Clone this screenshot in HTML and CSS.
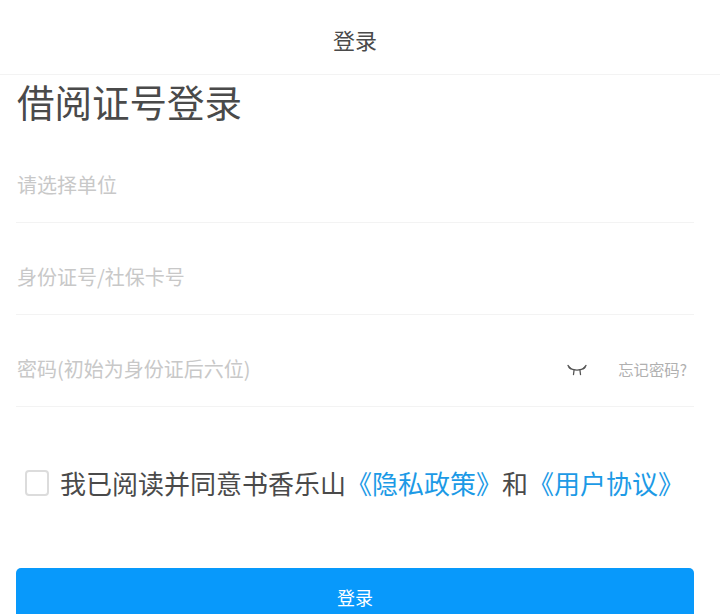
FILE: index.html
```html
<!DOCTYPE html>
<html lang="zh">
<head>
<meta charset="utf-8">
<title>登录</title>
<link rel="stylesheet" href="styles.css">
</head>
<body>
<header class="topbar">登录</header>
<main class="page">
  <h1 class="title">借阅证号登录</h1>
  <div class="field"><span class="placeholder">请选择单位</span></div>
  <div class="field"><span class="placeholder">身份证号/社保卡号</span></div>
  <div class="field">
    <span class="placeholder">密码(初始为身份证后六位)</span>
    <svg class="eye" width="20" height="14" viewBox="0 0 20 14" fill="none" stroke="#555" stroke-width="1.3" stroke-linecap="round">
      <path d="M2 4.5C6 8 14 8 18 4.5"/>
      <path d="M1 2.5L3.5 5.5M19 2.5L16.5 5.5M7 7.5L6.5 11.5M13 7.5L13.5 11.5"/>
    </svg>
    <span class="forgot">忘记密码?</span>
  </div>
  <label class="agree">
    <span class="checkbox"></span>
    <span>我已阅读并同意书香乐山<a class="link">《隐私政策》</a>和<a class="link">《用户协议》</a></span>
  </label>
  <button class="submit">登录</button>
</main>
</body>
</html>
```
FILE: styles.css
```css
* { box-sizing: border-box; }
html, body { margin: 0; height: 100%; overflow: hidden; background: #fff; }
body { font-family: "Noto Sans CJK SC", "Liberation Sans", sans-serif; color: #4a4a4a; }
.topbar {
  height: 75px;
  display: flex;
  align-items: center;
  justify-content: center;
  font-size: 22px;
  border-bottom: 1px solid #f3f3f3;
  padding-right: 10px;
  padding-top: 3px;
}
.page { padding: 0 26px 0 16px; }
.title {
  margin: 0;
  font-size: 37.5px;
  font-weight: 400;
  line-height: 52px;
  height: 54px;
  padding-left: 1px;
}
.field {
  height: 92px;
  display: flex;
  align-items: center;
  border-bottom: 1px solid #f3f3f3;
  padding-left: 1px;
  padding-top: 16px;
}
.field:first-of-type { height: 94px; padding-top: 18px; }
.placeholder { font-size: 20px; color: #c8c8c8; }
.eye { margin-left: auto; margin-right: 30px; margin-top: 2px; position: relative; left: -1px; }
.forgot { font-size: 15.4px; color: #b0b0b0; margin-right: 7px; }
.agree {
  display: flex;
  align-items: center;
  gap: 10px;
  margin-top: 54px;
  padding-left: 9px;
  font-size: 26px;
  line-height: 44px;
  white-space: nowrap;
}
.checkbox {
  width: 24px;
  height: 26px;
  flex: none;
  border: 2px solid #dcdcdc;
  border-radius: 4px;
  margin-right: 1px;
}
.link { color: #1c9ae6; }
.submit {
  display: block;
  width: 678px;
  height: 60px;
  margin-top: 63px;
  padding-bottom: 4px;
  border: 0;
  border-radius: 5px;
  background: #0899fb;
  color: #fff;
  font: inherit;
  font-size: 18px;
}
```
